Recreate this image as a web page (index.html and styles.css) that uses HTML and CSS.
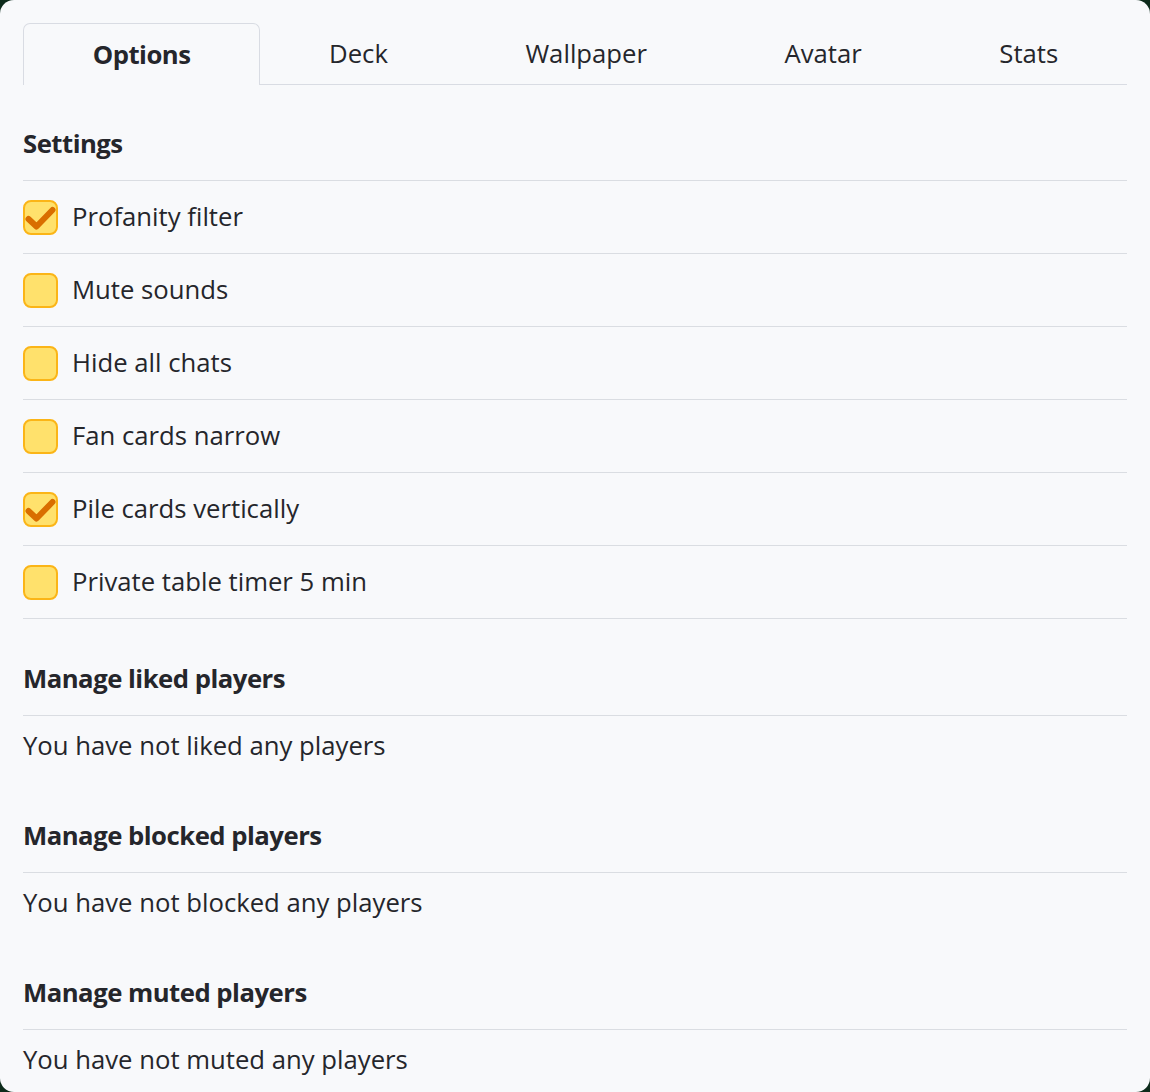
FILE: index.html
```html
<!DOCTYPE html>
<html>
<head>
<meta charset="utf-8">
<link rel="stylesheet" href="styles.css">
</head>
<body>
<div class="panel">
  <div class="tabs">
    <div class="tab active">Options</div>
    <div class="tab">Deck</div>
    <div class="tab">Wallpaper</div>
    <div class="tab">Avatar</div>
    <div class="tab">Stats</div>
  </div>

  <div class="section-title first">Settings</div>
  <label class="row"><span class="box checked"><svg viewBox="0 0 35 35" width="35" height="35"><path d="M5.5 19 L13.5 26.5 L29.5 10" fill="none" stroke="#d96e00" stroke-width="6" stroke-linecap="round" stroke-linejoin="round"/></svg></span><span class="label">Profanity filter</span></label>
  <label class="row"><span class="box"></span><span class="label">Mute sounds</span></label>
  <label class="row"><span class="box"></span><span class="label">Hide all chats</span></label>
  <label class="row"><span class="box"></span><span class="label">Fan cards narrow</span></label>
  <label class="row"><span class="box checked"><svg viewBox="0 0 35 35" width="35" height="35"><path d="M5.5 19 L13.5 26.5 L29.5 10" fill="none" stroke="#d96e00" stroke-width="6" stroke-linecap="round" stroke-linejoin="round"/></svg></span><span class="label">Pile cards vertically</span></label>
  <label class="row"><span class="box"></span><span class="label">Private table timer 5 min</span></label>

  <div class="section-title">Manage liked players</div>
  <p class="empty">You have not liked any players</p>

  <div class="section-title">Manage blocked players</div>
  <p class="empty">You have not blocked any players</p>

  <div class="section-title">Manage muted players</div>
  <p class="empty">You have not muted any players</p>
</div>
</body>
</html>
```

FILE: styles.css
```css
html, body {
  margin: 0;
  padding: 0;
  background: #0d2b1b;
}
body {
  font-family: "Open Sans", "Noto Sans", sans-serif;
  color: #25262b;
  font-size: 25.7px;
}
.panel {
  background: #f8f9fb;
  border-radius: 14px;
  min-height: 1092px;
  box-sizing: border-box;
  padding: 23px 23px 0 23px;
  overflow: hidden;
}
.tabs {
  display: flex;
  height: 62px;
  box-sizing: border-box;
}
.tab {
  flex: 1 1 auto;
  text-align: center;
  line-height: 62px;
  border-bottom: 1.5px solid #d9dce3;
  box-sizing: border-box;
}
.tab.active {
  font-weight: 700;
  letter-spacing: -0.5px;
  border: 1.5px solid #d9dce3;
  border-bottom: none;
  border-radius: 7px 7px 0 0;
}
.section-title {
  height: 73px;
  display: flex;
  align-items: center;
  font-weight: 700;
  letter-spacing: -0.5px;
  border-bottom: 1.5px solid #dadde2;
  box-sizing: border-box;
  margin-top: 24px;
  padding-bottom: 2px;
}
.section-title.first {
  margin-top: 23px;
}
.row {
  height: 73px;
  display: flex;
  align-items: center;
  gap: 14px;
  border-bottom: 1.5px solid #dadde2;
  box-sizing: border-box;
}
.label {
  margin-top: -2px;
}
.box {
  width: 35px;
  height: 35px;
  box-sizing: border-box;
  border: 2px solid #fbb517;
  background: #ffe16c;
  border-radius: 8px;
  position: relative;
  flex: none;
}
.box svg {
  position: absolute;
  left: -2px;
  top: -2px;
}
.empty {
  margin: 0;
  height: 60px;
  display: flex;
  align-items: center;
  padding-bottom: 2px;
  box-sizing: border-box;
}
```
